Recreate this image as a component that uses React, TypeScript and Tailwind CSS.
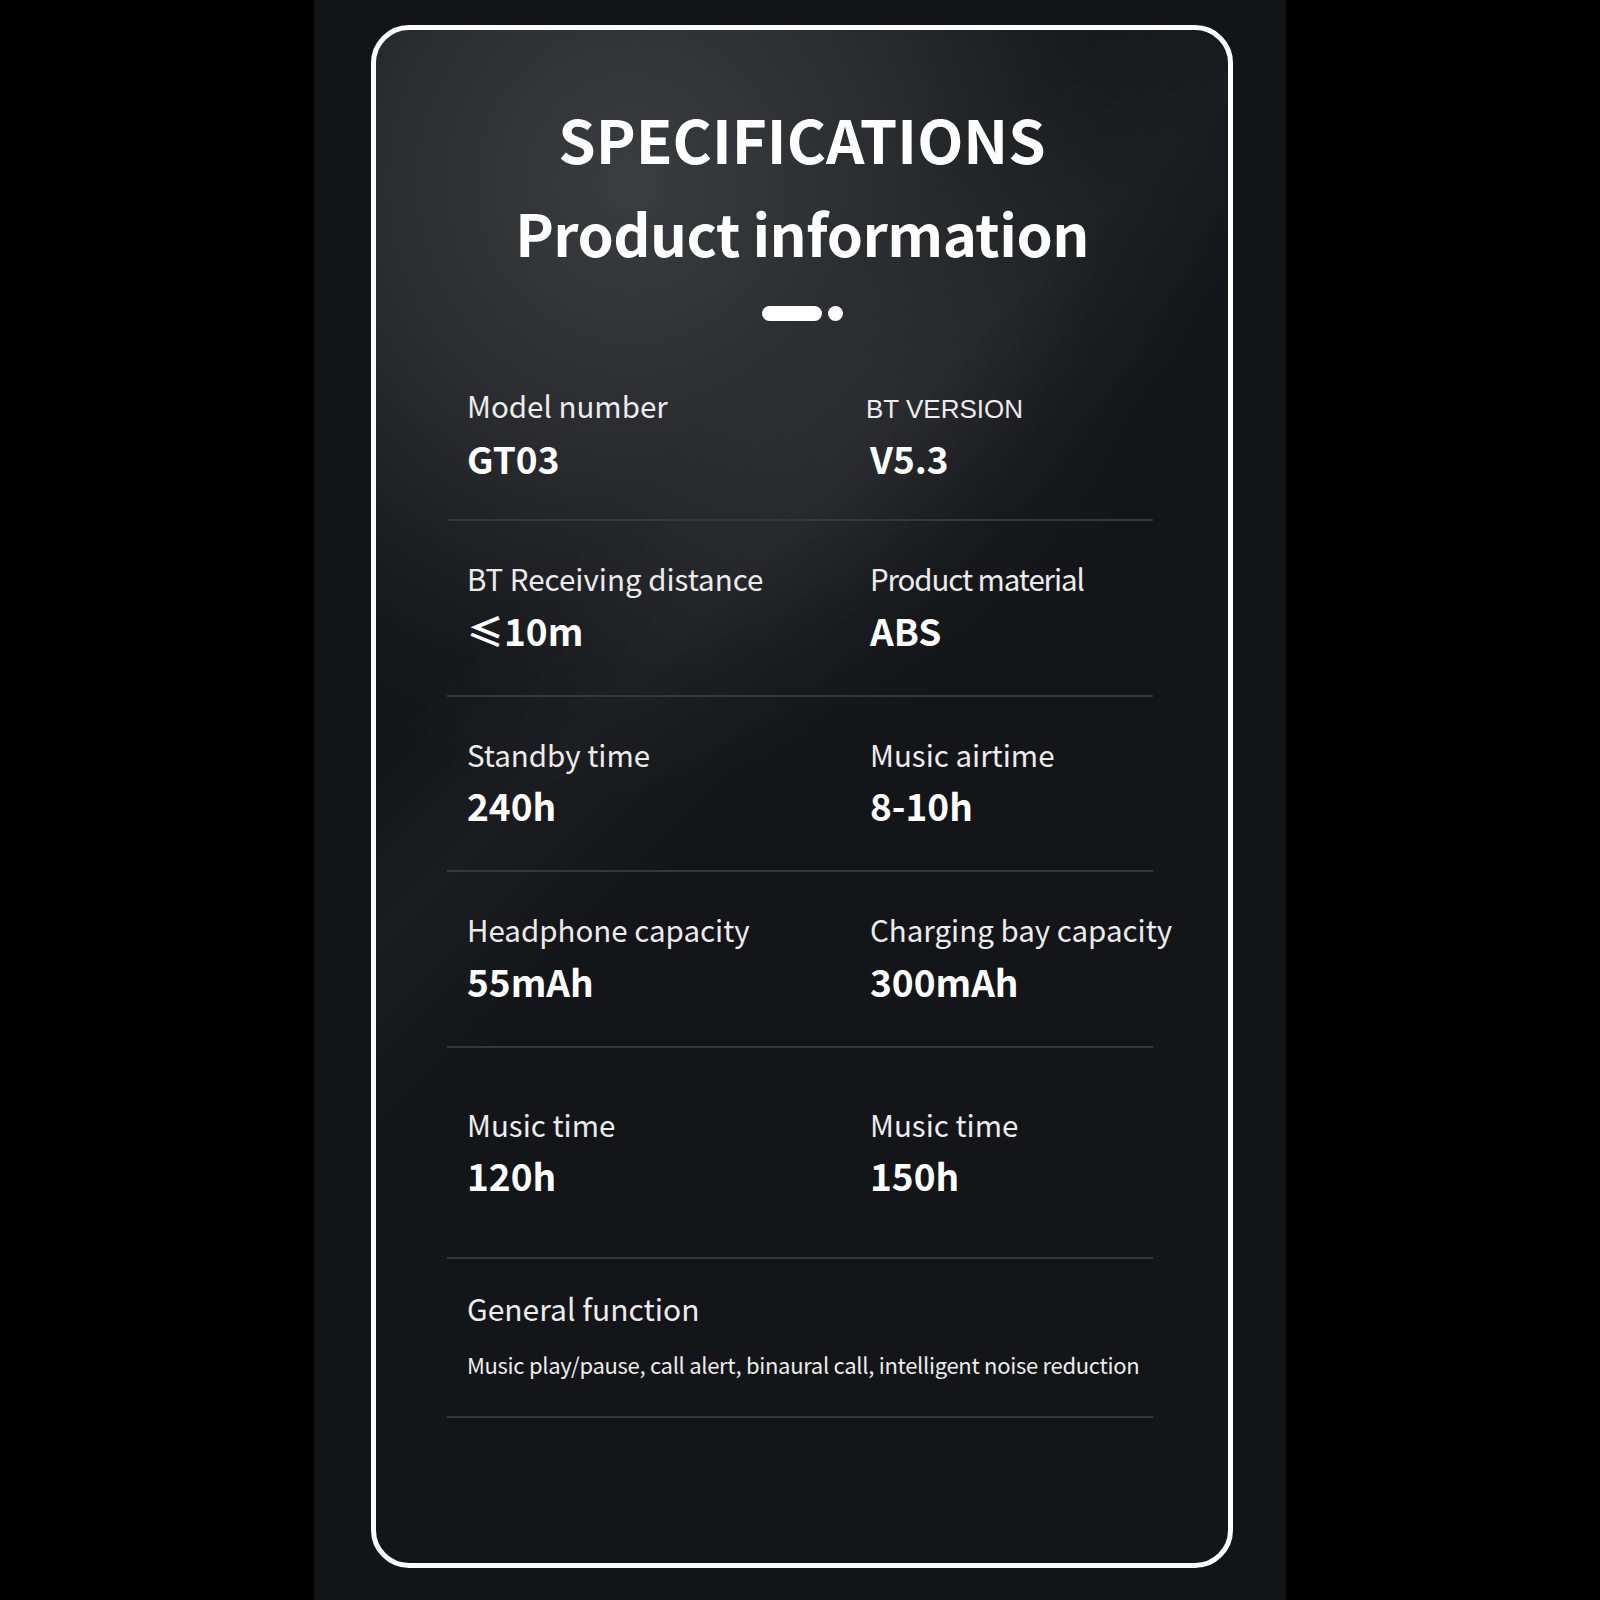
import React from "react";

type Row = {
  l: string;
  lv: string;
  r: string;
  rv: string;
  rArial?: boolean;
  rTight?: boolean;
};

const rows: Row[] = [
  { l: "Model number", lv: "GT03", r: "BT VERSION", rv: "V5.3", rArial: true },
  { l: "BT Receiving distance", lv: "≤10m", r: "Product material", rv: "ABS", rTight: true },
  { l: "Standby time", lv: "240h", r: "Music airtime", rv: "8-10h" },
  { l: "Headphone capacity", lv: "55mAh", r: "Charging bay capacity", rv: "300mAh" },
];

function Label({ children, tight }: { children: React.ReactNode; tight?: boolean }) {
  return (
    <div
      className={
        "whitespace-nowrap text-[29.5px] leading-none text-[#ececec] " +
        (tight ? "tracking-[-1.1px]" : "")
      }
    >
      {children}
    </div>
  );
}

function Value({ children }: { children: React.ReactNode }) {
  return (
    <div className="whitespace-nowrap text-[37px] font-bold leading-none text-white">
      {children}
    </div>
  );
}

function SpecRow({ row, first }: { row: Row; first?: boolean }) {
  return (
    <div
      className={
        "grid grid-cols-[403px_1fr] items-baseline gap-y-[18px] pl-[20px] border-b-2 border-[#36373a] " +
        (first ? "pt-[70px] pb-[42px]" : "pt-[43px] pb-[46px]")
      }
    >
      <Label>{row.l}</Label>
      {row.rArial ? (
        <div className="-ml-[4px] whitespace-nowrap text-[26px] leading-none text-[#ececec] font-['Liberation_Sans',Arial,sans-serif]">
          {row.r}
        </div>
      ) : (
        <Label tight={row.rTight}>{row.r}</Label>
      )}
      <Value>{row.lv}</Value>
      <Value>{row.rv}</Value>
    </div>
  );
}

export default function App() {
  return (
    <div className="min-h-[1600px] w-[1600px] bg-black flex justify-center font-['Noto_Sans_CJK_SC','Noto_Sans',sans-serif]">
      <div className="w-[972px] h-[1600px] bg-[#131418] pl-[57px] pt-[25px]">
        <div className="relative w-[862px] h-[1543px] rounded-[38px] border-[5px] border-white overflow-hidden bg-[radial-gradient(ellipse_70%_40%_at_30%_10%,#3b3c40_0%,#2a2b2f_45%,#18191d_80%,#141519_100%)]">
          <div className="absolute inset-0 bg-[linear-gradient(135deg,rgba(255,255,255,0)_0%,rgba(255,255,255,0)_30%,rgba(255,255,255,0.03)_38%,rgba(255,255,255,0)_48%)]" />
          <div className="relative flex flex-col items-center pt-[78px]">
            <div className="text-[60px] font-bold leading-none text-white">SPECIFICATIONS</div>
            <div className="mt-[35px] text-[58px] font-bold leading-none text-white tracking-[-0.5px]">
              Product information
            </div>
            <div className="mt-[45px] flex items-center gap-[6px]">
              <div className="w-[60px] h-[15px] rounded-full bg-white" />
              <div className="w-[15px] h-[15px] rounded-full bg-white" />
            </div>
          </div>
          <div className="relative mx-[71px] w-[706px]">
            {rows.map((r, i) => (
              <SpecRow key={i} row={r} first={i === 0} />
            ))}
            <div className="grid grid-cols-[403px_1fr] items-baseline gap-y-[18px] pl-[20px] border-b-2 border-[#36373a] pt-[62px] pb-[63px]">
              <Label>Music time</Label>
              <Label>Music time</Label>
              <Value>120h</Value>
              <Value>150h</Value>
            </div>
            <div className="pl-[20px] border-b-2 border-[#36373a] pt-[34px] pb-[41px] flex flex-col">
              <div className="text-[30px] leading-none text-[#ececec]">General function</div>
              <div className="mt-[30px] text-[22px] leading-none text-[#ececec] tracking-[-0.3px]">
                Music play/pause, call alert, binaural call, intelligent noise reduction
              </div>
            </div>
          </div>
        </div>
      </div>
    </div>
  );
}
